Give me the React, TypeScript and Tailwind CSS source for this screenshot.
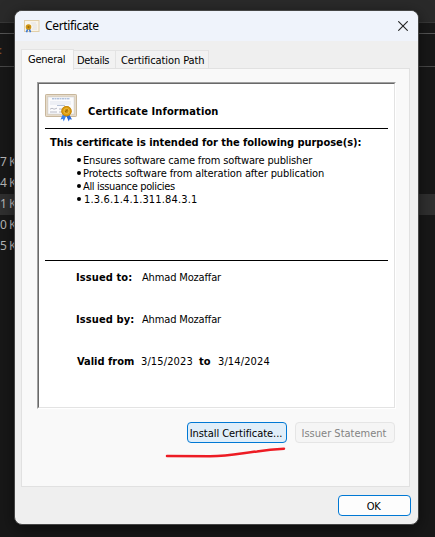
import React from "react";

const sizes = ["7 K", "4 K", "1 K", "0 K", "5 K"];

function Explorer() {
  return (
    <div className="flex h-full w-full flex-col bg-[#181818] font-['Noto_Sans',sans-serif] text-[12px] text-[#b8b8b8]">
      <div className="h-[23px] shrink-0 border-b border-[#383838] bg-[#2a2a2a]" />
      <div className="h-[11px] shrink-0 border-b border-[#555555] bg-[#191919]" />
      <div className="h-[33px] shrink-0 border-b border-[#484848] pt-[8px] text-[11px] leading-[16px] text-[#a05a30]">
        <span className="-ml-px">:</span>
      </div>
      <div className="h-[85px] shrink-0" />
      {sizes.map((s, i) => (
        <div
          key={s}
          className={
            i === 2
              ? "h-[21px] shrink-0 whitespace-pre bg-[#303030] leading-[20px] tracking-[-0.5px]"
              : "h-[21px] shrink-0 whitespace-pre leading-[20px] tracking-[-0.5px]"
          }
        >
          {s}
        </div>
      ))}
    </div>
  );
}

function CertificateIcon({ className, small = false }: { className: string; small?: boolean }) {
  return small ? (
    <svg className={className} viewBox="0 0 16 14">
      <rect x=".5" y=".5" width="14.5" height="11" fill="#f8f4ea" stroke="#e2cfa8" />
      <path d="M7 3h5M8 5h5M9 7h4M8 9h5" stroke="#dadde4" strokeWidth=".8" />
      <path d="M3.8 8.5 2.5 12.3M5.2 8.5 6.5 12.3" stroke="#3b78d4" strokeWidth="1.6" />
      <circle cx="4.5" cy="7" r="2.8" fill="#cf9412" />
      <circle cx="4.5" cy="7" r="1" fill="#9c6b08" />
    </svg>
  ) : (
    <svg className={className} viewBox="0 0 32 28">
      <rect x=".5" y=".5" width="31" height="22" rx=".7" fill="#ddd0bb" stroke="#c8b79c" />
      <rect x="1.5" y="1.5" width="29" height="20" fill="none" stroke="#eee6d8" strokeDasharray="1 1" />
      <rect x="3" y="3" width="26" height="17" fill="#fbfbfc" stroke="#d4d8dd" strokeWidth=".6" />
      <path d="M7 4.8h18" stroke="#91a8ce" strokeDasharray="2 .5" />
      <path d="M5 8h21M5 10h21" stroke="#d5dbe7" strokeWidth=".7" />
      <path d="M12 11.5h8" stroke="#a3b2cd" strokeWidth=".8" />
      <path d="M5 15.2l2-1 2 1 3-1M5 18h7M14 15h3M14 18h3" stroke="#a8abb7" strokeWidth=".8" fill="none" />
      <path d="M18 20l-2.5 5.5 2.4-.4.8 2.5 3-6.5z" fill="#3984ed" />
      <path d="M24 20l3 5.5-2.4-.3-.8 2.4-3-6.5z" fill="#2869d8" />
      <circle cx="21.5" cy="17.2" r="5.1" fill="#dfa011" />
      <circle cx="21.5" cy="17.2" r="4.7" fill="none" stroke="#b97b07" strokeWidth=".8" />
      <circle cx="21.5" cy="17" r="2.5" fill="#c78a0c" stroke="#f1c44c" strokeWidth=".8" />
      <path d="M20.2 17.8l2.5-2" stroke="#895b05" strokeWidth=".8" />
    </svg>
  );
}

function Purposes() {
  return (
    <ul className="mt-[3px] ml-[30px] text-[11px] leading-[13px]">
      <li className="flex h-[13px]"><Bullet /><span className="tracking-[-0.15px]">Ensures software came from software publisher</span></li>
      <li className="flex h-[13px]"><Bullet /><span className="tracking-[-0.12px]">Protects software from alteration after publication</span></li>
      <li className="flex h-[13px]"><Bullet /><span className="tracking-[-0.35px]">All issuance policies</span></li>
      <li className="flex h-[13px]"><Bullet /><span className="ml-px tracking-[0.15px]">1.3.6.1.4.1.311.84.3.1</span></li>
    </ul>
  );
}

function Bullet() {
  return <span className="mt-[4px] mr-[2px] ml-[2px] size-[4px] shrink-0 rounded-full bg-black" />;
}

function Dialog() {
  return (
    <section className="absolute top-[10px] left-[14px] flex h-[515px] w-[405px] flex-col overflow-hidden rounded-[8px] border border-[#454545] bg-[#efefef] font-['DejaVu_Sans_Condensed','DejaVu_Sans',sans-serif] text-[11px] [font-stretch:condensed] whitespace-nowrap text-black shadow-[0_4px_16px_rgba(0,0,0,0.5)]">
      <header className="flex h-[30px] shrink-0 items-center bg-[#eff3fb] pr-[10px] pl-[9px]">
        <CertificateIcon small className="mt-px h-[14px] w-[16px]" />
        <h1 className="ml-[5px] font-['Noto_Sans',sans-serif] text-[12px] leading-[16px] tracking-[-0.35px]">Certificate</h1>
        <svg className="ml-auto size-[10px]" viewBox="0 0 10 10" stroke="#222" strokeWidth="1.1">
          <path d="M.3.3l9.4 9.4M9.7.3.3 9.7" />
        </svg>
      </header>
      <nav className="mt-[7px] ml-[6px] flex h-[21px] shrink-0 items-end">
        <div className="relative z-10 -mb-px h-[21px] w-[53px] border border-b-0 border-[#e3e3e3] bg-[#f9f9f9] pl-[6px] leading-[19px] tracking-[-0.25px]">General</div>
        <div className="h-[19px] w-[42px] border border-b-0 border-l-0 border-[#e3e3e3] bg-[#f2f2f2] pl-[3px] leading-[19px] tracking-[-0.3px]">Details</div>
        <div className="h-[19px] w-[93px] border border-b-0 border-l-0 border-[#e3e3e3] bg-[#f2f2f2] pl-[5px] leading-[19px] tracking-[-0.1px]">Certification Path</div>
      </nav>
      <main className="-mt-px ml-[6px] flex h-[419px] w-[389px] shrink-0 flex-col border border-[#e1e1e1] bg-[#f9f9f9] pt-[13px] pl-[15px]">
        <div className="h-[327px] w-[359px] border-t border-r border-b border-l border-t-[#a0a0a0] border-r-white border-b-white border-l-[#a0a0a0]">
          <div className="flex h-full flex-col border border-t-[#696969] border-r-[#e3e3e3] border-b-[#e3e3e3] border-l-[#696969] bg-white px-[6px] pt-[10px]">
            <div className="flex h-[35px] w-[343px] shrink-0 border-b border-black">
              <CertificateIcon className="h-[28px] w-[32px]" />
              <h2 className="mt-[9px] ml-[11px] font-bold leading-[17px] tracking-[0.12px]">Certificate Information</h2>
            </div>
            <div className="h-[132px] w-[343px] shrink-0 border-b border-black pt-[5px]">
              <h3 className="ml-[5px] font-bold leading-[17px] tracking-[-0.04px]">This certificate is intended for the following purpose(s):</h3>
              <Purposes />
            </div>
            <div className="ml-[31px] flex h-[16px] shrink-0 pt-[8px] leading-[17px]">
              <b className="w-[66px] tracking-[0.1px]">Issued to:</b><span className="tracking-[-0.15px]">Ahmad Mozaffar</span>
            </div>
            <div className="mt-[26px] ml-[31px] flex h-[16px] shrink-0 pt-[8px] leading-[17px]">
              <b className="w-[66px] tracking-[0.1px]">Issued by:</b><span className="tracking-[-0.15px]">Ahmad Mozaffar</span>
            </div>
            <div className="mt-[26px] ml-[32px] flex h-[16px] shrink-0 pt-[8px] leading-[17px]">
              <b className="w-[64px]">Valid from</b><span className="w-[58px] tracking-[0.12px]">3/15/2023</span><b className="w-[19px]">to</b><span className="tracking-[0.12px]">3/14/2024</span>
            </div>
          </div>
        </div>
        <div className="mt-[13px] flex w-[358px] justify-end gap-[8px]">
          <button className="h-[21px] w-[100px] rounded-[4px] border border-[#0078d4] bg-[#e0eef9] pt-[2px] pr-[2px] leading-[17px] tracking-[-0.05px]">Install Certificate...</button>
          <button className="h-[21px] w-[100px] rounded-[4px] border border-[#e5e5e5] bg-[#f5f5f5] pt-[2px] pr-[2px] leading-[17px] text-[#838383]">Issuer Statement</button>
        </div>
      </main>
      <button className="mt-[8px] mr-[7px] h-[21px] w-[73px] self-end rounded-[4px] border border-[#0078d4] bg-[#fdfdfd] pt-[2px] pr-[2px] leading-[17px] tracking-[-0.4px]">OK</button>
    </section>
  );
}

export default function App() {
  return (
    <div className="relative h-[537px] w-[435px] overflow-hidden">
      <Explorer />
      <Dialog />
      <svg className="absolute top-[440px] left-[160px] h-[24px] w-[132px]" viewBox="0 0 132 24" fill="none">
        <path d="M7 16 50 16.2C70 16.2 82 13 97 11.4 108 9.8 114 9.3 124 8.8" stroke="#ed1c24" strokeWidth="2.5" strokeLinecap="round" />
      </svg>
    </div>
  );
}
